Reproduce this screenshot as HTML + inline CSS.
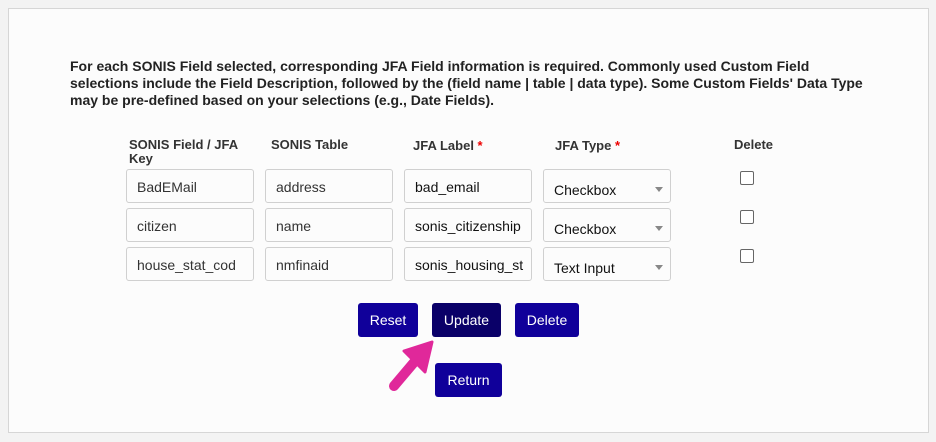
<!DOCTYPE html>
<html><head><style>
body{margin:0;width:936px;height:442px;background:#f3f3f3;font-family:"Liberation Sans",Arial,sans-serif;position:relative;overflow:hidden}
.panel{position:absolute;left:8px;top:8px;width:919px;height:423px;background:#fcfcfc;border:1px solid #d6d6d6}
.p{position:absolute;left:70px;top:58px;font-size:14px;font-weight:bold;line-height:17px;color:#222;white-space:nowrap}
.h{position:absolute;font-size:13px;font-weight:bold;color:#333;line-height:14px}
.h span{color:#e00}
.in{position:absolute;width:126px;height:32px;border:1px solid #d0d0d0;border-radius:3px;background:#fcfcfc;font-size:14px;color:#333;box-sizing:content-box}
.in div{position:absolute;left:10px;top:9px;white-space:nowrap;overflow:hidden;width:118px}
.sel div{top:12px;color:#111}
.sel i{position:absolute;right:7px;top:17px;border-left:4px solid transparent;border-right:4px solid transparent;border-top:5px solid #888}
.cb{position:absolute;left:740px;width:12px;height:12px;border:1px solid #666;border-radius:2px;background:#fff}
.b{position:absolute;height:34px;background:#10009a;color:#fff;font-size:14px;border-radius:3px;text-align:center;line-height:34px}
</style></head><body>
<div class="panel"></div>
<div class="p">For each SONIS Field selected, corresponding JFA Field information is required. Commonly used Custom Field<br>selections include the Field Description, followed by the (field name | table | data type). Some Custom Fields' Data Type<br>may be pre-defined based on your selections (e.g., Date Fields).</div>
<div class="h" style="left:129px;top:138px">SONIS Field / JFA<br>Key</div>
<div class="h" style="left:271px;top:138px">SONIS Table</div>
<div class="h" style="left:413px;top:139px">JFA Label <span>*</span></div>
<div class="h" style="left:555px;top:139px">JFA Type <span>*</span></div>
<div class="h" style="left:734px;top:138px">Delete</div>

<div class="in" style="left:126px;top:169px"><div>BadEMail</div></div>
<div class="in" style="left:265px;top:169px"><div>address</div></div>
<div class="in" style="left:404px;top:169px"><div style="color:#111">bad_email</div></div>
<div class="in sel" style="left:543px;top:169px"><div>Checkbox</div><i></i></div>
<div class="cb" style="top:171px"></div>

<div class="in" style="left:126px;top:208px"><div>citizen</div></div>
<div class="in" style="left:265px;top:208px"><div>name</div></div>
<div class="in" style="left:404px;top:208px"><div style="color:#111">sonis_citizenship</div></div>
<div class="in sel" style="left:543px;top:208px"><div>Checkbox</div><i></i></div>
<div class="cb" style="top:210px"></div>

<div class="in" style="left:126px;top:247px"><div>house_stat_cod</div></div>
<div class="in" style="left:265px;top:247px"><div>nmfinaid</div></div>
<div class="in" style="left:404px;top:247px"><div style="color:#111">sonis_housing_st</div></div>
<div class="in sel" style="left:543px;top:247px"><div>Text Input</div><i></i></div>
<div class="cb" style="top:249px"></div>

<div class="b" style="left:358px;top:303px;width:60px">Reset</div>
<div class="b" style="left:432px;top:303px;width:69px;background:#0a0068">Update</div>
<div class="b" style="left:515px;top:303px;width:64px">Delete</div>
<div class="b" style="left:435px;top:363px;width:67px">Return</div>

<svg style="position:absolute;left:0;top:0" width="936" height="442">
<line x1="394" y1="386" x2="416" y2="360" stroke="#e0289a" stroke-width="10" stroke-linecap="round"/>
<polygon points="432,342 404,351 425,372" fill="#e0289a" stroke="#e0289a" stroke-width="3" stroke-linejoin="round"/>
</svg>
</body></html>
